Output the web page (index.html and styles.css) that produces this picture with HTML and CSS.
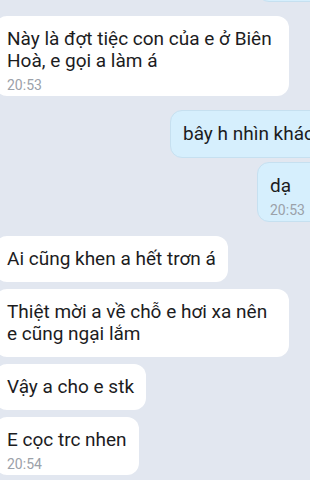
FILE: index.html
```html
<!DOCTYPE html>
<html lang="vi">
<head>
    <meta charset="UTF-8">
    <title>Chat</title>
    <link rel="stylesheet" href="styles.css">
</head>
<body>
<div class="chat_wrap">
    <div class="msg_group msg_out">
        <div class="bubble bubble_stub"></div>
    </div>

    <div class="msg_group msg_in">
        <div class="bubble">
            <div class="bubble_text">Này là đợt tiệc con của e ở Biên Hoà, e gọi a làm á</div>
            <div class="bubble_time">20:53</div>
        </div>
    </div>

    <div class="msg_group msg_out">
        <div class="bubble">
            <div class="bubble_text">bây h nhìn khác</div>
        </div>
        <div class="bubble has_time">
            <div class="bubble_text">dạ</div>
            <div class="bubble_time">20:53</div>
        </div>
    </div>

    <div class="msg_group msg_in">
        <div class="bubble">
            <div class="bubble_text">Ai cũng khen a hết trơn á</div>
        </div>
        <div class="bubble">
            <div class="bubble_text">Thiệt mời a về chỗ e hơi xa nên e cũng ngại lắm</div>
        </div>
        <div class="bubble">
            <div class="bubble_text">Vậy a cho e stk</div>
        </div>
        <div class="bubble has_time">
            <div class="bubble_text">E cọc trc nhen</div>
            <div class="bubble_time">20:54</div>
        </div>
    </div>
</div>
</body>
</html>
```

FILE: styles.css
```css
* {
    padding: 0;
    margin: 0;
    box-sizing: border-box;
}

html, body {
    height: 100%;
}

body {
    background-color: #e2e7f0;
    font-family: Roboto, "Noto Sans", sans-serif;
    color: #1c1c1e;
    overflow: hidden;
}

.chat_wrap {
    width: 310px;
    display: flex;
    flex-direction: column;
    gap: 14px;
}

.msg_group {
    display: flex;
    flex-direction: column;
}

.msg_group.msg_in {
    align-items: flex-start;
    gap: 7px;
    margin-left: -5px;
}

.msg_group.msg_out {
    align-items: flex-end;
    gap: 4px;
    margin-right: -17px;
}

.bubble {
    background-color: #fff;
    border-radius: 12px;
    padding: 12px;
    max-width: 294px;
}

.msg_out .bubble {
    background-color: #d6effd;
    border: 1px solid #c6e0f0;
    max-width: none;
    white-space: nowrap;
}

.msg_out .bubble.has_time,
.bubble_stub {
    min-width: 70px;
}

.bubble_stub {
    height: 44px;
    margin-top: -42px;
}

.bubble_text {
    font-size: 19px;
    line-height: 22px;
}

.bubble_time {
    font-size: 14px;
    line-height: 16px;
    color: #9ba1a9;
    margin: 5px 0 -9px;
}
```
